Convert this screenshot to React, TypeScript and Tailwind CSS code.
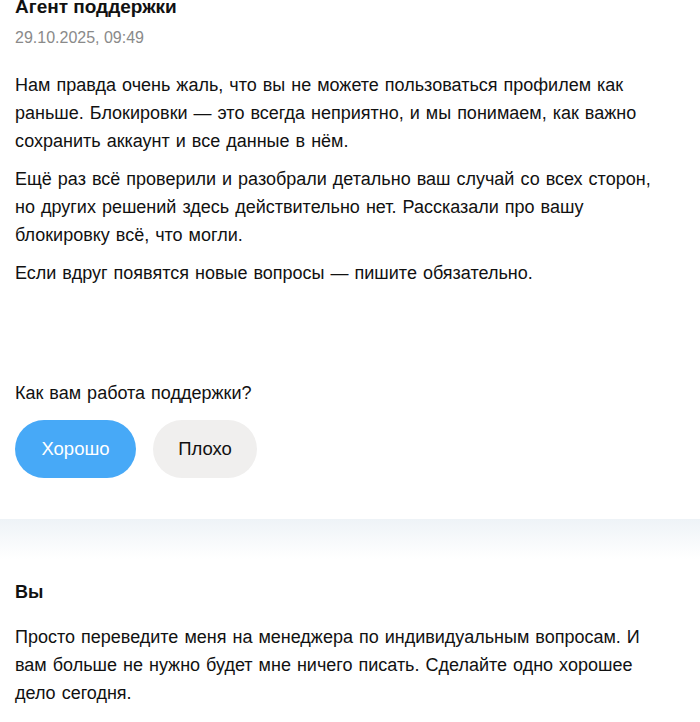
const font = { fontFamily: '"Liberation Sans", Arial, sans-serif' };

export default function App() {
  return (
    <div className="w-[700px] h-[722px] overflow-hidden bg-white text-[#111]" style={font}>
      <section className="pl-[15px] pr-[25px] -mt-[5px]">
        <h2 className="text-[19px] leading-[24px] font-bold">Агент поддержки</h2>
        <div className="mt-[7px] text-[16px] leading-[24px] text-[#8a8a8a]">29.10.2025, 09:49</div>

        <div className="mt-[21px] flex flex-col gap-[10px] text-[18px] leading-[28px] [word-spacing:1px]">
          <p>
            Нам правда очень жаль, что вы не можете пользоваться профилем как раньше. Блокировки — это
            всегда неприятно, и мы понимаем, как важно сохранить аккаунт и все данные в нём.
          </p>
          <p>
            Ещё раз всё проверили и разобрали детально ваш случай со всех сторон, но других решений
            здесь действительно нет. Рассказали про вашу блокировку всё, что могли.
          </p>
          <p>Если вдруг появятся новые вопросы — пишите обязательно.</p>
        </div>

        <div className="mt-[92px] text-[18px] leading-[28px] [word-spacing:1px]">Как вам работа поддержки?</div>
        <div className="mt-[13px] flex gap-[17px]">
          <button className="h-[58px] w-[121px] rounded-full bg-[#47a9f7] text-white text-[18.5px]">
            Хорошо
          </button>
          <button className="h-[58px] w-[104px] rounded-full bg-[#f0efee] text-[#111] text-[18.5px]">
            Плохо
          </button>
        </div>
      </section>

      <div className="mt-[41px] h-[40px] bg-gradient-to-b from-[#eef3f7] to-white" />

      <section className="pl-[15px] pr-[25px] mt-[21px]">
        <h3 className="text-[18px] leading-[24px] font-bold">Вы</h3>
        <p className="mt-[19px] text-[18px] leading-[28px] [word-spacing:1px]">
          Просто переведите меня на менеджера по индивидуальным вопросам. И вам больше не нужно будет
          мне ничего писать. Сделайте одно хорошее дело сегодня.
        </p>
      </section>
    </div>
  );
}
